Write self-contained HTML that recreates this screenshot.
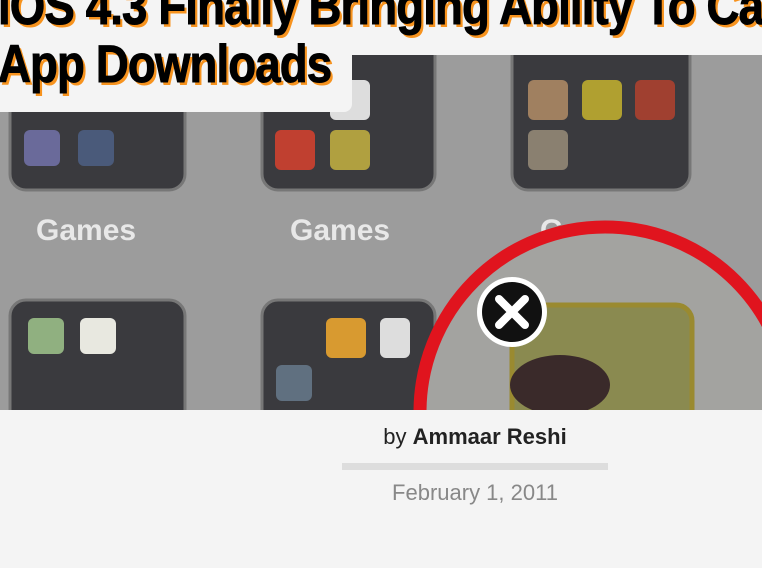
<!DOCTYPE html>
<html><head><meta charset="utf-8"><style>
html,body{margin:0;padding:0;width:762px;height:568px;overflow:hidden;background:#f4f4f4;font-family:"Liberation Sans",sans-serif}
.img{position:absolute;left:0;top:55px;width:762px;height:355px;overflow:hidden}
.box{position:absolute;left:0;top:0;width:352px;height:112px;background:#f4f4f4;border-bottom-right-radius:8px}
.hw{position:absolute;left:0;top:0;width:762px;height:112px;overflow:hidden}
.h{position:absolute;left:-2px;top:-22px;font-weight:bold;font-size:53px;line-height:58px;color:#000;text-shadow:3px 3px 0 #f7931e;white-space:nowrap;letter-spacing:-1px;transform:scaleX(.86);transform-origin:0 0;font-family:"Liberation Sans Narrow","Liberation Sans",sans-serif;-webkit-text-stroke:1px #000}
.by{position:absolute;left:188px;width:574px;top:424px;text-align:center;font-size:22px;color:#222}
.bar{position:absolute;left:342px;top:463px;width:266px;height:7px;background:#ddd}
.date{position:absolute;left:188px;width:574px;top:480px;text-align:center;font-size:22px;color:#888}
</style></head><body>
<svg class="img" viewBox="0 55 762 355" width="762" height="355">
<rect x="0" y="55" width="762" height="355" fill="#9c9c9c"/>
<rect x="10" y="30" width="175" height="160" rx="16" fill="#3a3a3e" stroke="#777" stroke-width="3"/>
<rect x="262" y="30" width="173" height="160" rx="16" fill="#3a3a3e" stroke="#777" stroke-width="3"/>
<rect x="512" y="30" width="178" height="160" rx="16" fill="#3a3a3e" stroke="#777" stroke-width="3"/>
<rect x="24" y="130" width="36" height="36" rx="6" fill="#6a6a9a"/>
<rect x="78" y="130" width="36" height="36" rx="6" fill="#4a5a7a"/>
<rect x="275" y="130" width="40" height="40" rx="6" fill="#c04030"/>
<rect x="330" y="130" width="40" height="40" rx="6" fill="#b0a040"/>
<rect x="330" y="80" width="40" height="40" rx="6" fill="#ddd"/>
<rect x="528" y="80" width="40" height="40" rx="6" fill="#a08060"/>
<rect x="582" y="80" width="40" height="40" rx="6" fill="#b0a030"/>
<rect x="635" y="80" width="40" height="40" rx="6" fill="#a04030"/>
<rect x="528" y="130" width="40" height="40" rx="6" fill="#8a8070"/>
<g font-family="Liberation Sans" font-weight="bold" font-size="30" fill="#e8e8e8">
<text x="36" y="240">Games</text><text x="290" y="240">Games</text><text x="540" y="240">Games</text></g>
<rect x="10" y="300" width="175" height="160" rx="16" fill="#3a3a3e" stroke="#777" stroke-width="3"/>
<rect x="262" y="300" width="173" height="160" rx="16" fill="#3a3a3e" stroke="#777" stroke-width="3"/>
<rect x="28" y="318" width="36" height="36" rx="6" fill="#90b080"/>
<rect x="80" y="318" width="36" height="36" rx="6" fill="#e8e8e0"/>
<rect x="326" y="318" width="40" height="40" rx="6" fill="#d89a30"/>
<rect x="380" y="318" width="30" height="40" rx="6" fill="#ddd"/>
<rect x="276" y="365" width="36" height="36" rx="6" fill="#607080"/>
<circle cx="605" cy="412" r="185" fill="#a3a3a0"/>
<rect x="512" y="305" width="180" height="140" rx="16" fill="#8a8a50" stroke="#9a8a30" stroke-width="5"/>
<ellipse cx="560" cy="385" rx="50" ry="30" fill="#3a2a2a"/>
<circle cx="605" cy="412" r="185" fill="none" stroke="#e0141e" stroke-width="13"/>
<circle cx="512" cy="312" r="35" fill="#fff"/>
<circle cx="512" cy="312" r="30" fill="#111"/>
<path d="M499 299L525 325M525 299L499 325" stroke="#fff" stroke-width="8" stroke-linecap="round"/>
</svg>
<div class="box"></div>
<div class="hw"><div class="h">iOS 4.3 Finally Bringing Ability To Cancel<br>App Downloads</div></div>
<div class="by">by <b>Ammaar Reshi</b></div>
<div class="bar"></div>
<div class="date">February 1, 2011</div>
</body></html>
